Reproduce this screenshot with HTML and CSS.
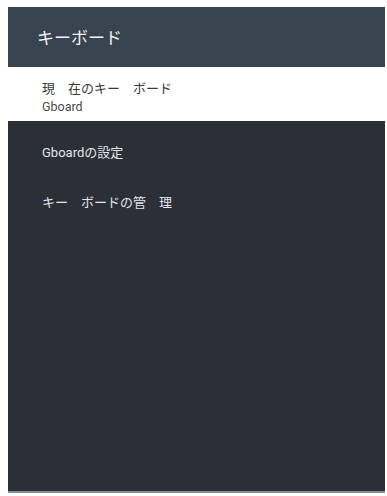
FILE: index.html
```html
<!DOCTYPE html>
<html lang="ja">
<head>
<meta charset="utf-8">
<link rel="stylesheet" href="styles.css">
</head>
<body>
<div class="frame">
  <header class="header"><h1 class="title">キーボード</h1></header>
  <section class="current">
    <div class="current-label">現　在のキー　ボード</div>
    <div class="current-value">Gboard</div>
  </section>
  <section class="menu">
    <div class="menu-item">Gboardの設定</div>
    <div class="menu-item">キー　ボードの管　理</div>
  </section>
</div>
</body>
</html>
```
FILE: styles.css
```css
html, body {
  margin: 0;
  padding: 0;
  background: #ffffff;
}
body {
  width: 387px;
  height: 496px;
  overflow: hidden;
  font-family: Roboto, "Noto Sans CJK JP", sans-serif;
}
.frame {
  margin: 7px 2px 0 8px;
  height: 486px;
  display: flex;
  flex-direction: column;
  border-bottom: 2px solid #8a8e94;
  box-sizing: border-box;
}
.header {
  height: 60px;
  background: #37434f;
  display: flex;
  align-items: center;
  padding-left: 29px;
  flex-shrink: 0;
}
.title {
  margin: 0;
  font-size: 17px;
  font-weight: 400;
  color: #f0f2f4;
  letter-spacing: 0;
  padding-bottom: 2px;
}
.current {
  height: 54px;
  background: #ffffff;
  padding: 14px 0 0 34px;
  box-sizing: border-box;
  flex-shrink: 0;
}
.current-label {
  font-size: 13px;
  line-height: 16px;
  color: #3a3a3a;
}
.current-value {
  font-size: 12.5px;
  line-height: 15px;
  color: #4a4a4a;
  margin-top: 2px;
}
.menu {
  flex: 1;
  background: #2b2f37;
  padding: 23px 0 0 34px;
  display: flex;
  flex-direction: column;
  gap: 32px;
}
.menu-item {
  font-size: 13px;
  line-height: 18px;
  color: #e2e4e8;
}
```
